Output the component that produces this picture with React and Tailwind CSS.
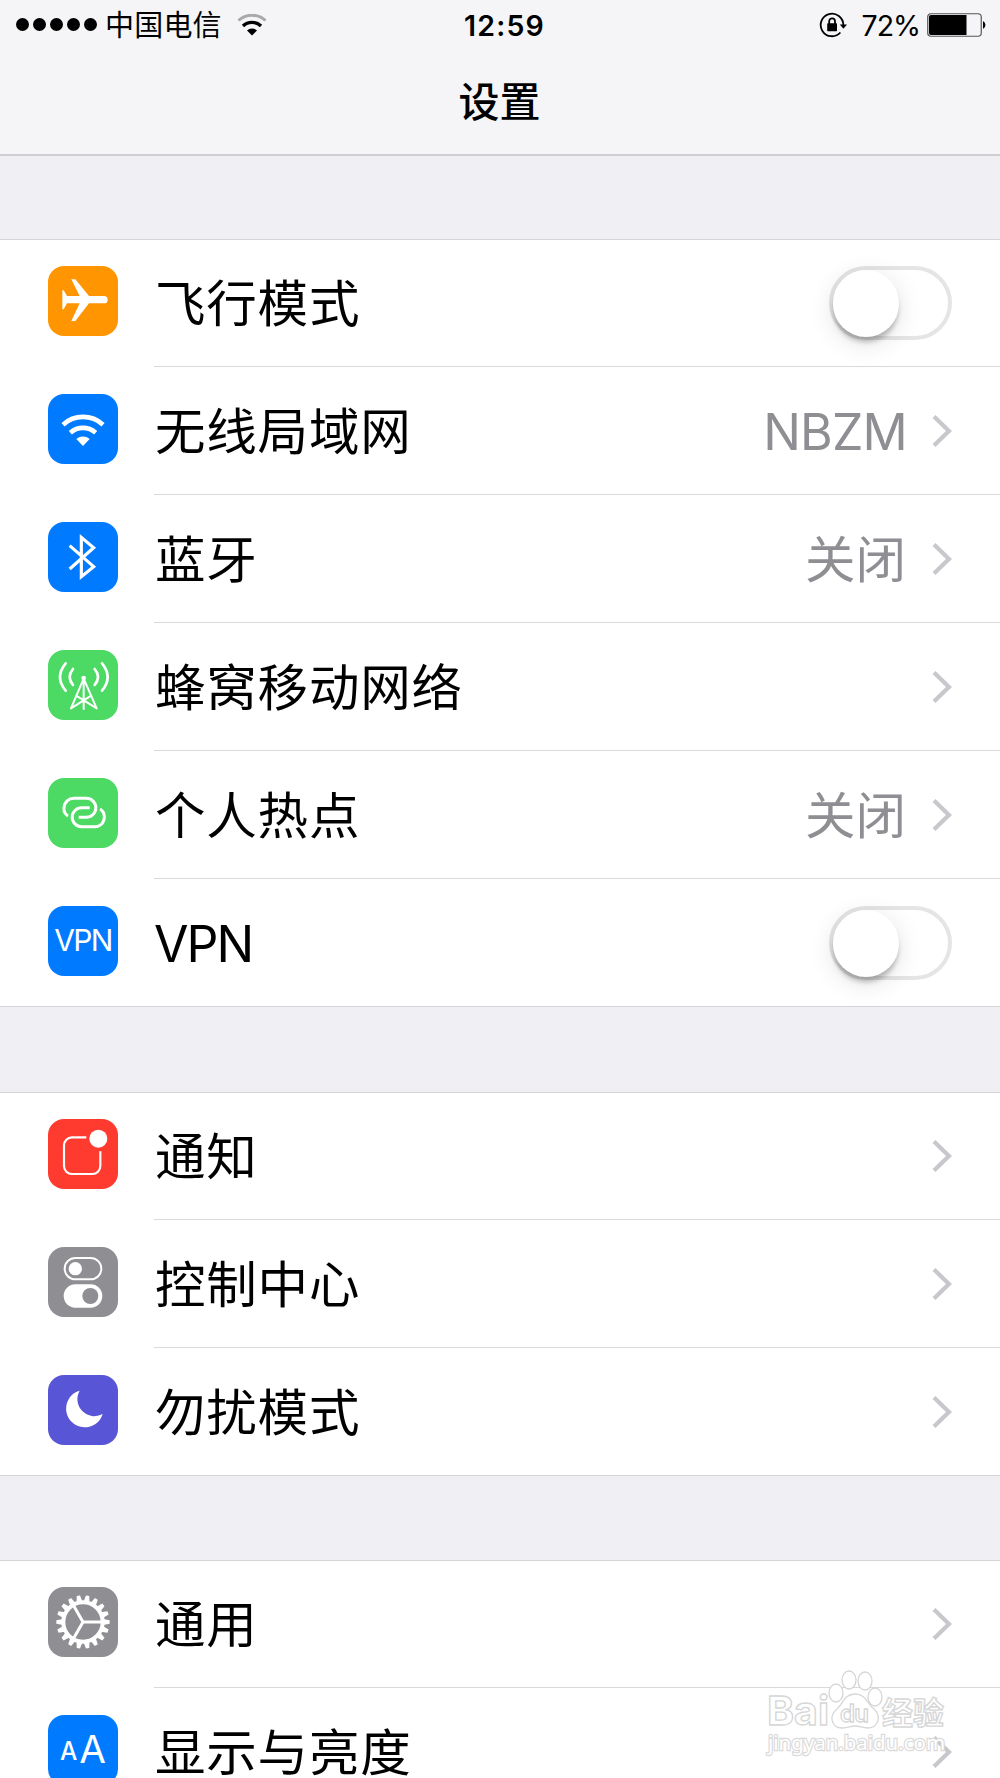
import React from "react";

const textFont = "font-[Inter,'Noto_Sans_CJK_SC',sans-serif]";

function Tile({ color, children }) {
  return (
    <div className={`mb-[31px] h-[70px] w-[70px] shrink-0 overflow-hidden rounded-[16px] ${color}`}>
      <svg viewBox="0 0 210 210" className="h-full w-full" fill="none" stroke="none">
        {children}
      </svg>
    </div>
  );
}

// 18 teeth, with the wheel resting on a tooth at 0 degrees
const gearTeeth = Array.from({ length: 18 }, (_, i) => i * 20);

const icons = {
  airplane: (
    <Tile color="bg-[#ff9500]">
      <path fill="white" d="M43 73h4L57 90H95L70 40h12L123 90H168A11 11 0 0 1 168 112H123L82 165h-12L95 112H57L47 130h-4Z" />
    </Tile>
  ),
  wifi: (
    <Tile color="bg-[#007aff]">
      <path stroke="white" strokeWidth="14" d="M45 92A89 89 0 0 1 165 92M67 116A57 57 0 0 1 143 116" />
      <path fill="white" d="M85 135A31 31 0 0 1 125 135L105 156Z" />
    </Tile>
  ),
  bluetooth: (
    <Tile color="bg-[#007aff]">
      <path stroke="white" strokeWidth="9.5" d="M65 71L137 134L100 164V46L137 77L65 141" />
    </Tile>
  ),
  cellular: (
    <Tile color="bg-[#4cd964]">
      <g stroke="white" strokeLinecap="round">
        <path strokeWidth="8" d="M53 40Q19 81 53 122M75 57Q55 81 75 105M140 57Q160 81 140 105M162 40Q196 81 162 122" />
        <path strokeWidth="6" d="M107 86V177M107 86L69 175M107 86L146 175M69 175L126 139M146 175L88 139" />
      </g>
      <circle cx="107" cy="84" r="7" fill="white" />
    </Tile>
  ),
  hotspot: (
    <Tile color="bg-[#4cd964]">
      <path
        stroke="white"
        strokeWidth="9"
        d="M60 114C50 108 47 99 48 90C49 72 62 61 78 61H115A28.5 28.5 0 0 1 115 118H92M125 89H101A28.5 28.5 0 0 0 101 146H141C157 146 169 134 169 118C169 107 165 98 156 93"
      />
    </Tile>
  ),
  vpn: (
    <Tile color="bg-[#007aff]">
      <text x="19" y="135" textLength="177" fill="white" fontSize="90" className="font-[Inter,sans-serif] font-normal">
        VPN
      </text>
    </Tile>
  ),
  notifications: (
    <Tile color="bg-[#ff3b30]">
      <path stroke="white" strokeWidth="6.5" d="M115 55H72A24 24 0 0 0 48 79V141A24 24 0 0 0 72 165H133A24 24 0 0 0 157 141V97" />
      <circle cx="151" cy="59" r="27" fill="white" />
    </Tile>
  ),
  control: (
    <Tile color="bg-[#8e8e93]">
      <rect x="50" y="33" width="110" height="64" rx="32" stroke="white" strokeWidth="6" />
      <circle cx="82" cy="65" r="20" fill="white" />
      <rect x="47" y="112" width="116" height="70" rx="35" fill="white" />
      <circle cx="127" cy="147" r="24" fill="#8e8e93" />
    </Tile>
  ),
  moon: (
    <Tile color="bg-[#5856d6]">
      <path fill="white" d="M95 47A56 56 0 1 0 164 117A51 51 0 0 1 95 47Z" />
    </Tile>
  ),
  gear: (
    <Tile color="bg-[#8e8e93]">
      <g transform="translate(105 105)">
        <circle r="59" stroke="white" strokeWidth="12" />
        {gearTeeth.map((a) => (
          <path key={a} transform={`rotate(${a})`} fill="white" d="M60 -9L80 -5V5L60 9Z" />
        ))}
        <path stroke="white" strokeWidth="9" d="M0 0H56M0 0L-28 -49M0 0L-28 49" />
      </g>
    </Tile>
  ),
  display: (
    <Tile color="bg-[#007aff]">
      <text x="36" y="135" fill="white" fontSize="75" textLength="52" lengthAdjust="spacingAndGlyphs" className="font-[Inter,sans-serif] font-medium">
        A
      </text>
      <text x="94" y="143" fill="white" fontSize="113" textLength="80" lengthAdjust="spacingAndGlyphs" className="font-[Inter,sans-serif] font-normal">
        A
      </text>
    </Tile>
  ),
};

function Toggle() {
  return (
    <div className="mr-12 h-[74px] w-[123px] rounded-full border-4 border-[#e5e5e5] bg-white">
      <div className="h-[67px] w-[66px] rounded-full bg-white shadow-[0_6px_26px_rgba(0,0,0,0.12),0_6px_5px_-1px_rgba(0,0,0,0.24)]" />
    </div>
  );
}

function Chevron() {
  return (
    <svg viewBox="0 0 20 32" className="mr-12 ml-[26px] h-8 w-5" fill="none">
      <path d="M2 1.5L17 16L2 30.5" stroke="#c7c7cc" strokeWidth="4.2" />
    </svg>
  );
}

function Row({ icon, label, value, toggle, latin, last }) {
  return (
    <div className="flex h-32 items-end pl-12">
      {icons[icon]}
      <div className={`ml-9 flex h-full flex-1 items-center border-b ${last ? "border-transparent" : "border-[#d9d9dc]"}`}>
        <span
          className={
            latin
              ? "flex-1 pt-[2px] text-[50px] leading-none tracking-[-2px]"
              : "flex-1 pt-[3px] pl-px text-[50.5px] leading-none tracking-[0.8px]"
          }
        >
          {label}
        </span>
        {value && (
          <span
            className={
              value === "关闭"
                ? "pt-[3px] text-[50.5px] leading-none text-[#8e8e93]"
                : "-mr-px pt-[2px] text-[50px] leading-none tracking-[-0.8px] text-[#8e8e93]"
            }
          >
            {value}
          </span>
        )}
        {toggle ? <Toggle /> : <Chevron />}
      </div>
    </div>
  );
}

function Group({ rows }) {
  return (
    <section className="bg-white shadow-[inset_0_1px_0_#d3d3d8,inset_0_-1px_0_#d3d3d8]">
      {rows.map((row, i) => (
        <Row key={row.label} {...row} last={i === rows.length - 1} />
      ))}
    </section>
  );
}

function StatusBar() {
  return (
    <div className="grid h-[49px] grid-cols-3 items-center">
      <div className="flex items-center pl-4">
        <div className="flex gap-1">
          {[0, 1, 2, 3, 4].map((n) => (
            <span key={n} className="h-[13px] w-[13px] rounded-full bg-black" />
          ))}
        </div>
        <span className="ml-[8px] pt-[2px] text-[29px] leading-none tracking-[0.2px]">中国电信</span>
        <svg viewBox="0 0 30 22" className="ml-[15px] h-[22px] w-[30px]" fill="none">
          <path d="M1.5 6.5A20 20 0 0 1 28.5 6.5" stroke="#a9a9ab" strokeWidth="3" />
          <path d="M6 12A13 13 0 0 1 24 12" stroke="black" strokeWidth="3.4" />
          <path d="M10 16.5A7 7 0 0 1 20 16.5L15 21.5Z" fill="black" />
        </svg>
      </div>
      <div className="pt-[3px] text-center text-[28.5px] leading-none font-semibold tracking-[1.2px]">
        <span className="ml-[9px]">12:59</span>
      </div>
      <div className="flex items-center justify-end pr-[13px]">
        <svg viewBox="0 0 28 26" className="mr-[15px] h-[26px] w-7" fill="none">
          <path d="M21.4 20.5A11.3 11.3 0 1 1 24.3 13" stroke="black" strokeWidth="1.8" />
          <path d="M20.8 12.5H28L24.4 16.8Z" fill="black" />
          <rect x="8.2" y="11.3" width="9.8" height="8" rx="0.8" fill="black" />
          <path d="M10.2 12V9.2A2.9 2.9 0 0 1 16 9.2V12" stroke="black" strokeWidth="1.8" />
        </svg>
        <span className="pt-[3px] text-[28.5px] leading-none tracking-[-1px]">72%</span>
        <svg viewBox="0 0 60 24" className="ml-[7px] h-6 w-[60px]" fill="none">
          <rect x="0.75" y="0.75" width="53.5" height="22.5" rx="3.2" stroke="#555" strokeWidth="1.2" />
          <path d="M4 2H39.5V22H4A2 2 0 0 1 2 20V4A2 2 0 0 1 4 2Z" fill="black" />
          <path d="M56 8A4.5 4.5 0 0 1 56 16Z" fill="black" />
        </svg>
      </div>
    </div>
  );
}

function Watermark() {
  return (
    <svg viewBox="0 0 190 90" className="absolute right-[53px] bottom-[20px] h-[90px] w-[190px]" fill="white" stroke="#d6d6d6" strokeWidth="1.3">
      <g className="font-[Inter,'Noto_Sans_CJK_SC',sans-serif] font-bold">
        <text x="10" y="57" fontSize="40" textLength="62" lengthAdjust="spacingAndGlyphs">Bai</text>
        <text x="125" y="56" fontSize="31" textLength="62">经验</text>
      </g>
      <ellipse cx="79" cy="25" rx="7" ry="9" />
      <ellipse cx="92" cy="12" rx="7" ry="9" />
      <ellipse cx="108" cy="13" rx="7" ry="9" />
      <ellipse cx="118" cy="29" rx="7" ry="9" />
      <path d="M98 26C87 26 86 36 80 41C71 48 75 60 85 60C92 60 93 58 98 58C103 58 105 60 111 60C121 60 125 48 117 41C110 36 109 26 98 26Z" />
      <text x="83" y="54" fontSize="24" textLength="29" className="font-[Inter,sans-serif] font-semibold">du</text>
      <text
        x="11"
        y="82"
        fontSize="20"
        textLength="177"
        lengthAdjust="spacingAndGlyphs"
        stroke="#dadada"
        strokeWidth="2.4"
        paintOrder="stroke"
        className="font-[Noto_Sans,sans-serif]"
      >
        jingyan.baidu.com
      </text>
    </svg>
  );
}

export default function App() {
  return (
    <main className={`relative h-[1778px] w-[1000px] overflow-hidden bg-[#efeff4] text-black ${textFont}`}>
      <header className="h-[156px] border-b-2 border-[#cfcfd3] bg-[#f5f5f7]">
        <StatusBar />
        <h1 className="pt-[33px] pr-px text-center text-[41px] leading-none font-medium">设置</h1>
      </header>

      <div className="flex flex-col pt-[83px]">
        <Group
          rows={[
            { icon: "airplane", label: "飞行模式", toggle: true },
            { icon: "wifi", label: "无线局域网", value: "NBZM" },
            { icon: "bluetooth", label: "蓝牙", value: "关闭" },
            { icon: "cellular", label: "蜂窝移动网络" },
            { icon: "hotspot", label: "个人热点", value: "关闭" },
            { icon: "vpn", label: "VPN", toggle: true, latin: true },
          ]}
        />
        <div className="h-[85px]" />
        <Group
          rows={[
            { icon: "notifications", label: "通知" },
            { icon: "control", label: "控制中心" },
            { icon: "moon", label: "勿扰模式" },
          ]}
        />
        <div className="h-[84px]" />
        <Group
          rows={[
            { icon: "gear", label: "通用" },
            { icon: "display", label: "显示与亮度" },
          ]}
        />
      </div>

      <Watermark />
    </main>
  );
}
